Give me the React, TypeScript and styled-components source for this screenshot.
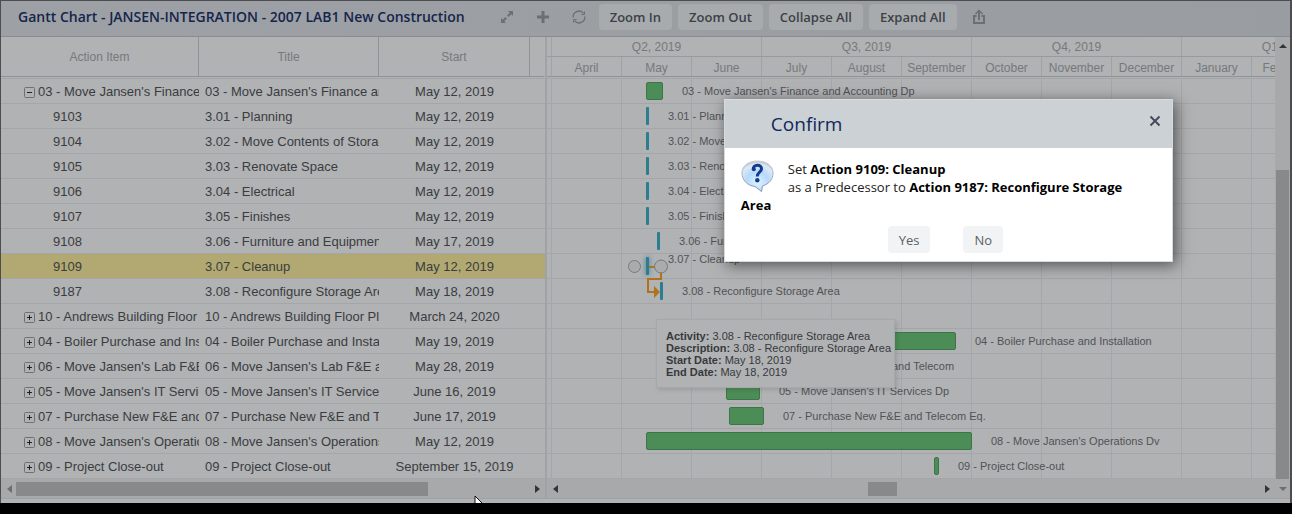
import React from "react";
import styled, { createGlobalStyle } from "styled-components";

const GlobalStyle = createGlobalStyle`
  *, *::before, *::after { box-sizing: border-box; }
  body {
    margin: 0;
    background: #000;
    font-family: "Liberation Sans", Arial, sans-serif;
  }
  button { font: inherit; border: 0; padding: 0; cursor: pointer; }
  h1, h2, p { margin: 0; font-weight: inherit; }
`;

const LINE = "#a4a6a9";
const SURFACE = "#b0b2b4";

const Shell = styled.main`
  position: relative;
  background: ${SURFACE};
  border: 1px solid #4b4d50;
  border-right-width: 2px;
  border-bottom: 0;
  padding-bottom: 4px;
  margin-bottom: 11px;
  overflow: hidden;
`;

const Toolbar = styled.header`
  display: flex;
  align-items: center;
  height: 36px;
  padding: 0 17px 3px;
  background: linear-gradient(90deg, #9da1a6, #999ca1);
  border-bottom: 1px solid #888b90;
  font-family: "Open Sans", "Noto Sans", sans-serif;
`;

const PageTitle = styled.h1`
  font-size: 14px;
  line-height: 20px;
  font-weight: 600;
  color: #15254a;
  white-space: nowrap;
  margin-right: 35px;
`;

const IconGroup = styled.div`
  display: flex;
  gap: 22px;
  margin-right: 13px;
`;

const IconButton = styled.button`
  display: flex;
  background: none;
  color: #6b7075;
`;

const ButtonGroup = styled.div`
  display: flex;
  gap: 6px;
  margin-right: 15px;
`;

const ToolButton = styled.button`
  height: 26px;
  padding: 0 11px;
  border-radius: 4px;
  background: #a8abae;
  color: #3c4148;
  font-size: 13px;
  font-weight: 600;
  white-space: nowrap;
`;

const Body = styled.div`
  display: flex;
`;

const Side = styled.section`
  flex: 0 0 546px;
  min-width: 0;
  border-right: 2px solid #a0a2a5;
`;

const TaskTable = styled.table`
  width: 544px;
  table-layout: fixed;
  border-collapse: separate;
  border-spacing: 0;
`;

const HeadCell = styled.th`
  height: 40px;
  padding: 0;
  border-bottom: 1px solid #909295;
  border-right: 1px solid ${(p) => (p["aria-hidden"] ? "transparent" : "#909295")};
  font-size: 12px;
  font-weight: 400;
  color: #76797c;
`;

const SpacerCell = styled.td`
  height: 2px;
  padding: 0;
  border-bottom: 1px solid ${LINE};
`;

const TaskRow = styled.tr<{ $selected: boolean }>`
  background: ${(p) => (p.$selected ? "#b1a971" : "transparent")};
`;

const Cell = styled.td<{ $center?: boolean; $indent?: number }>`
  height: 25px;
  padding: 2px 0 0 ${(p) => p.$indent ?? 0}px;
  border-bottom: 1px solid ${LINE};
  font-size: 13px;
  line-height: 22px;
  color: #3a3c3f;
  text-align: ${(p) => (p.$center ? "center" : "left")};
  white-space: nowrap;
  overflow: hidden;
`;

const CellLine = styled.div`
  display: flex;
  align-items: center;
  gap: 3px;
  height: 22px;
`;

const Toggle = styled.button`
  display: flex;
  flex: none;
  background: none;
`;

const ScrollTrack = styled.div`
  display: flex;
  align-items: center;
  height: 20px;
  padding: 0 5px;
  background: #a7a9ab;
  border-bottom: 1px solid #9fa1a4;
`;

const ScrollLane = styled.div<{ $before: number }>`
  flex: 1;
  padding: 0 4px 0 ${(p) => p.$before}px;
`;

const SideThumb = styled.div`
  width: 412px;
  height: 14px;
  background: #87898b;
`;

const ChartThumb = styled(SideThumb)`
  width: 29px;
`;

const ScrollCorner = styled.div`
  display: flex;
  justify-content: center;
  width: 14px;
  margin: 0 -5px 0 6px;
`;

const Chart = styled.section`
  flex: 1;
  min-width: 0;
`;

const ChartMain = styled.div`
  display: flex;
`;

const ChartPane = styled.div`
  flex: 1;
  min-width: 0;
  overflow: hidden;
`;

const Scale = styled.div<{ $last?: boolean }>`
  display: flex;
  height: 20px;
  padding-left: 4px;
  border-bottom: 1px solid ${(p) => (p.$last ? "#909295" : "#989a9d")};
`;

const ScaleCell = styled.div<{ $months: number }>`
  flex: 0 0 ${(p) => p.$months * 70}px;
  border-left: 1px solid #a0a2a5;
  font-size: 12px;
  line-height: ${(p) => (p.$months > 1 ? 20 : 22)}px;
  color: #76797c;
  text-align: center;
`;

const Timeline = styled.div`
  position: relative;
  margin-top: 1px;
  border-top: 1px solid ${LINE};
  background: repeating-linear-gradient(90deg, ${LINE} 0 1px, transparent 1px 70px) 4px 0;
`;

const TimeRow = styled.div`
  display: flex;
  align-items: center;
  height: 25px;
  border-bottom: 1px solid ${LINE};
  white-space: nowrap;
`;

const Bar = styled.div<{ $task: boolean; $glow?: boolean }>`
  flex: none;
  height: 18px;
  border-radius: ${(p) => (p.$task ? 1 : 2)}px;
  background: ${(p) => (p.$task ? "#2b7d8f" : "#4c8c57")};
  border: ${(p) => (p.$task ? "0" : "1px solid #3c7547")};
  box-shadow: ${(p) => (p.$glow ? "0 0 5px #2b7d8f" : "none")};
`;

const BarLabel = styled.span<{ $raised?: boolean }>`
  padding: 0 0 ${(p) => (p.$raised ? 14 : 0)}px 19px;
  font-size: 11px;
  color: #505356;
`;

const LinkLayer = styled.svg`
  position: absolute;
  left: 76px;
  top: 175px;
`;

const Tooltip = styled.aside`
  position: absolute;
  left: 109px;
  top: 240px;
  width: 239px;
  height: 69px;
  padding: 10px 9px;
  background: #b0b2b4;
  border: 1px solid #a6a8ab;
  box-shadow: 2px 2px 4px rgba(0, 0, 0, 0.12);
  font-size: 11px;
  line-height: 12px;
  color: #37393c;
  white-space: nowrap;
`;

const VScroll = styled.div`
  flex: 0 0 15px;
  display: flex;
  flex-direction: column;
  align-items: center;
  padding-top: 6px;
  background: #a7a9ab;
`;

const VThumb = styled.div`
  width: 13px;
  flex: 1;
  margin-top: 121px;
  background: #87898b;
`;

const Dialog = styled.section`
  position: absolute;
  left: 56%;
  top: 98px;
  width: 449px;
  margin-left: 1px;
  background: #fff;
  border: 1px solid #d8dadd;
  box-shadow: 3px 3px 14px rgba(0, 0, 0, 0.55);
  font-family: "Open Sans", "Noto Sans", sans-serif;
`;

const DialogHead = styled.header`
  display: flex;
  align-items: center;
  justify-content: space-between;
  height: 48px;
  padding: 0 11px 0 46px;
  background: #ccd1d6;
`;

const DialogTitle = styled.h2`
  font-size: 19px;
  line-height: 26px;
  color: #10285a;
`;

const CloseButton = styled.button`
  display: flex;
  background: none;
  padding-bottom: 6px;
`;

const Message = styled.p`
  padding: 12px 30px 0 16px;
  font-size: 13px;
  line-height: 18px;
  color: #222;
  b { font-weight: 700; color: #000; }
`;

const MessageIcon = styled.svg`
  float: left;
  margin: 0 14px 0 0;
`;

const Actions = styled.footer`
  display: flex;
  justify-content: center;
  gap: 33px;
  padding: 12px 6px 8px 0;
`;

const DialogButton = styled.button`
  height: 27px;
  padding: 0 11px;
  border-radius: 4px;
  background: #f1f3f5;
  color: #5c6068;
  font-size: 13px;
`;

const Pointer = styled.svg`
  position: absolute;
  left: 472px;
  bottom: -10px;
`;

type Task = {
  id: string;
  title: string;
  start: string;
  toggle?: "open" | "closed";
  selected?: boolean;
  offset?: number;
  width?: number;
};

const tasks: Task[] = [
  { id: "03 - Move Jansen's Finance and Accounting Dp", title: "03 - Move Jansen's Finance and Accounting Dp", start: "May 12, 2019", toggle: "open", offset: 99, width: 17 },
  { id: "9103", title: "3.01 - Planning", start: "May 12, 2019", offset: 99, width: 3 },
  { id: "9104", title: "3.02 - Move Contents of Storage Area", start: "May 12, 2019", offset: 99, width: 3 },
  { id: "9105", title: "3.03 - Renovate Space", start: "May 12, 2019", offset: 99, width: 3 },
  { id: "9106", title: "3.04 - Electrical", start: "May 12, 2019", offset: 99, width: 3 },
  { id: "9107", title: "3.05 - Finishes", start: "May 12, 2019", offset: 99, width: 3 },
  { id: "9108", title: "3.06 - Furniture and Equipment", start: "May 17, 2019", offset: 110, width: 3 },
  { id: "9109", title: "3.07 - Cleanup", start: "May 12, 2019", selected: true, offset: 99, width: 3 },
  { id: "9187", title: "3.08 - Reconfigure Storage Area", start: "May 18, 2019", offset: 113, width: 3 },
  { id: "10 - Andrews Building Floor Plan", title: "10 - Andrews Building Floor Plan", start: "March 24, 2020", toggle: "closed" },
  { id: "04 - Boiler Purchase and Installation", title: "04 - Boiler Purchase and Installation", start: "May 19, 2019", toggle: "closed", offset: 115, width: 294 },
  { id: "06 - Move Jansen's Lab F&E and Telecom", title: "06 - Move Jansen's Lab F&E and Telecom", start: "May 28, 2019", toggle: "closed", offset: 137, width: 45 },
  { id: "05 - Move Jansen's IT Services Dp", title: "05 - Move Jansen's IT Services Dp", start: "June 16, 2019", toggle: "closed", offset: 179, width: 34 },
  { id: "07 - Purchase New F&E and Telecom Eq.", title: "07 - Purchase New F&E and Telecom Eq.", start: "June 17, 2019", toggle: "closed", offset: 182, width: 35 },
  { id: "08 - Move Jansen's Operations Dv", title: "08 - Move Jansen's Operations Dv", start: "May 12, 2019", toggle: "closed", offset: 99, width: 326 },
  { id: "09 - Project Close-out", title: "09 - Project Close-out", start: "September 15, 2019", toggle: "closed", offset: 387, width: 5 },
];

const quarters = ["Q2, 2019", "Q3, 2019", "Q4, 2019", "Q1, 2020"];
const months = ["April", "May", "June", "July", "August", "September", "October", "November", "December", "January", "February"];

const arrows = {
  left: "M6 0 L1 4 L6 8 Z",
  right: "M1 0 L6 4 L1 8 Z",
  up: "M0 5 L4 1 L8 5 Z",
  down: "M0 1 L4 5 L8 1 Z",
};

function Arrow({ dir, dim }: { dir: keyof typeof arrows; dim?: boolean }) {
  const flat = dir === "up" || dir === "down";
  return (
    <svg width={flat ? 8 : 6} height={flat ? 6 : 8} aria-hidden="true">
      <path d={arrows[dir]} fill={dim ? "#6c6e70" : "#333537"} />
    </svg>
  );
}

function ToggleIcon({ open }: { open: boolean }) {
  return (
    <svg width="11" height="11" aria-hidden="true">
      <rect x="0.5" y="0.5" width="10" height="10" rx="1" fill="none" stroke="#6e7073" />
      <path d={open ? "M3 5.5H8" : "M3 5.5H8M5.5 3V8"} stroke="#1f2123" strokeWidth="1" />
    </svg>
  );
}

export default function App() {
  return (
    <>
      <GlobalStyle />
      <Shell>
        <Toolbar>
          <PageTitle>Gantt Chart - JANSEN-INTEGRATION - 2007 LAB1 New Construction</PageTitle>
          <IconGroup>
            <IconButton aria-label="Full screen">
              <svg width="14" height="14" viewBox="0 0 14 14" fill="currentColor">
                <path d="M8 1H13V6L11.300 4.300L8.600 7L7 5.400L9.700 2.700Z" />
                <path d="M6 13H1V8L2.700 9.700L5.400 7L7 8.600L4.300 11.300Z" />
              </svg>
            </IconButton>
            <IconButton aria-label="Add">
              <svg width="14" height="14" viewBox="0 0 14 14">
                <path d="M7 1V13M1 7H13" stroke="currentColor" strokeWidth="3" />
              </svg>
            </IconButton>
            <IconButton aria-label="Refresh">
              <svg width="14" height="14" viewBox="0 0 14 14" fill="none" stroke="currentColor" strokeWidth="1.300">
                <path d="M1.200 7.500A5.800 5.800 0 0 1 11.500 3.300M12.800 6.500A5.800 5.800 0 0 1 2.500 10.700" />
                <path d="M12.500 1.500V4.500H9.500M1.500 12.500V9.500H4.500" strokeWidth="1" />
              </svg>
            </IconButton>
          </IconGroup>
          <ButtonGroup>
            <ToolButton>Zoom In</ToolButton>
            <ToolButton>Zoom Out</ToolButton>
            <ToolButton>Collapse All</ToolButton>
            <ToolButton>Expand All</ToolButton>
          </ButtonGroup>
          <IconButton aria-label="Share">
            <svg width="14" height="16" viewBox="0 0 14 16" fill="none" stroke="currentColor" strokeWidth="2">
              <path d="M4.500 7H2V14H12V7H9.500M7 11V3" />
              <path d="M3.500 5L7 1.500L10.500 5" strokeWidth="1.500" />
            </svg>
          </IconButton>
        </Toolbar>
        <Body>
          <Side>
            <TaskTable>
              <colgroup>
                <col width="198" />
                <col width="180" />
                <col width="151" />
                <col />
              </colgroup>
              <thead>
                <tr>
                  <HeadCell scope="col">Action Item</HeadCell>
                  <HeadCell scope="col">Title</HeadCell>
                  <HeadCell scope="col">Start</HeadCell>
                  <HeadCell aria-hidden="true" />
                </tr>
              </thead>
              <tbody>
                <tr><SpacerCell colSpan={4} /></tr>
                {tasks.map((t) => (
                  <TaskRow key={t.id} $selected={!!t.selected}>
                    <Cell $indent={t.toggle ? 23 : 52}>
                      <CellLine>
                        {t.toggle && (
                          <Toggle aria-label={t.toggle === "open" ? "Collapse" : "Expand"}>
                            <ToggleIcon open={t.toggle === "open"} />
                          </Toggle>
                        )}
                        {t.id}
                      </CellLine>
                    </Cell>
                    <Cell $indent={6}>{t.title}</Cell>
                    <Cell $center>{t.start}</Cell>
                    <Cell />
                  </TaskRow>
                ))}
              </tbody>
            </TaskTable>
            <ScrollTrack>
              <Arrow dir="left" dim />
              <ScrollLane $before={4}><SideThumb /></ScrollLane>
              <Arrow dir="right" />
            </ScrollTrack>
          </Side>
          <Chart>
            <ChartMain>
              <ChartPane>
                <Scale>
                  {quarters.map((q) => <ScaleCell key={q} $months={3}>{q}</ScaleCell>)}
                </Scale>
                <Scale $last>
                  {months.map((m) => <ScaleCell key={m} $months={1}>{m}</ScaleCell>)}
                </Scale>
                <Timeline>
                  {tasks.map((t) => (
                    <TimeRow key={t.id}>
                      {t.offset !== undefined && (
                        <>
                          <Bar $task={!t.toggle} $glow={t.selected} style={{ marginLeft: t.offset, width: t.width }} />
                          <BarLabel $raised={t.selected}>{t.title}</BarLabel>
                        </>
                      )}
                    </TimeRow>
                  ))}
                  <LinkLayer width="50" height="50" aria-hidden="true">
                    <path d="M26 13H38V25H25V38H32" fill="none" stroke="#b0731c" strokeWidth="2" />
                    <path d="M31 32L37 38L31 44Z" fill="#b0731c" />
                    <circle cx="11.500" cy="12.500" r="6" fill="#a9abad" stroke="#77797c" />
                    <circle cx="38" cy="12.500" r="6.500" fill="#a9abad" stroke="#77797c" />
                  </LinkLayer>
                  <Tooltip>
                    <b>Activity:</b> 3.08 - Reconfigure Storage Area<br />
                    <b>Description:</b> 3.08 - Reconfigure Storage Area<br />
                    <b>Start Date:</b> May 18, 2019<br />
                    <b>End Date:</b> May 18, 2019
                  </Tooltip>
                </Timeline>
              </ChartPane>
              <VScroll>
                <Arrow dir="up" />
                <VThumb />
              </VScroll>
            </ChartMain>
            <ScrollTrack>
              <Arrow dir="left" />
              <ScrollLane $before={310}><ChartThumb /></ScrollLane>
              <Arrow dir="right" />
              <ScrollCorner>
                <Arrow dir="down" dim />
              </ScrollCorner>
            </ScrollTrack>
          </Chart>
        </Body>
        <Dialog role="dialog" aria-labelledby="confirm-title">
          <DialogHead>
            <DialogTitle id="confirm-title">Confirm</DialogTitle>
            <CloseButton aria-label="Close">
              <svg width="12" height="12" viewBox="0 0 12 12">
                <path d="M1.500 1.500L10.500 10.500M10.500 1.500L1.500 10.500" stroke="#454b5c" strokeWidth="2" />
              </svg>
            </CloseButton>
          </DialogHead>
          <Message>
            <MessageIcon width="33" height="32" viewBox="0 0 33 32" aria-hidden="true">
              <defs>
                <radialGradient id="bubble" cx="50%" cy="70%" r="70%">
                  <stop offset="0" stopColor="#dff3ff" />
                  <stop offset="0.500" stopColor="#b4dafc" />
                  <stop offset="0.850" stopColor="#dfe9f5" />
                  <stop offset="1" stopColor="#b9bfc8" />
                </radialGradient>
                <linearGradient id="rim" x1="0" y1="0" x2="0" y2="1">
                  <stop offset="0" stopColor="#c9ced4" />
                  <stop offset="1" stopColor="#7f8fa6" />
                </linearGradient>
              </defs>
              <path d="M16.500 1C25 1 32 5.500 32 13C32 19.500 28 24 21.500 26L20.500 31.500L14 26.500C6 25.500 1 20 1 13C1 5.500 8 1 16.500 1Z" fill="url(#bubble)" stroke="url(#rim)" />
              <path d="M12.300 9.500C11.500 4 21 3.800 20.500 9C20.200 12 16.500 12.200 16.200 16.500" fill="none" stroke="#143a8c" strokeWidth="3" />
              <circle cx="12.800" cy="9.300" r="2" fill="#143a8c" />
              <circle cx="16.300" cy="20.300" r="2.200" fill="#143a8c" />
            </MessageIcon>
            Set <b>Action 9109: Cleanup</b><br />
            as a Predecessor to <b>Action 9187: Reconfigure Storage Area</b>
          </Message>
          <Actions>
            <DialogButton>Yes</DialogButton>
            <DialogButton>No</DialogButton>
          </Actions>
        </Dialog>
        <Pointer width="14" height="18" aria-hidden="true">
          <path d="M2 1V16L6 12L9 18L11 17L8 11H12Z" fill="#fff" stroke="#111" />
        </Pointer>
      </Shell>
    </>
  );
}
